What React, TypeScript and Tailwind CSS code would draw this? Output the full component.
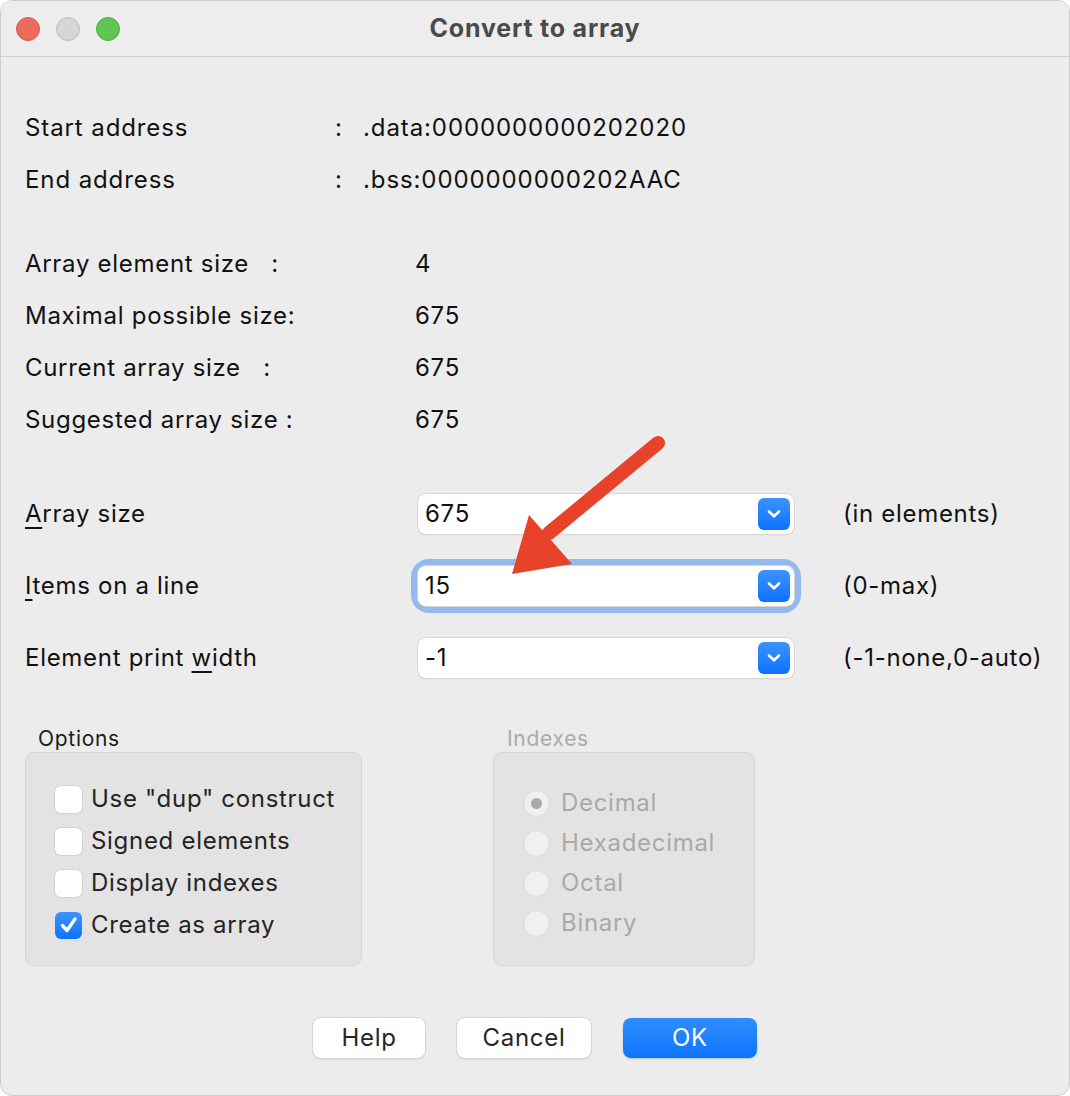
import React from 'react';

const font = { fontFamily: 'Inter, "Noto Sans", sans-serif' };

function Chevron() {
  return (
    <svg width="16" height="12" viewBox="0 0 16 12" fill="none">
      <path d="M3 3.5 L8 8.3 L13 3.5" stroke="white" strokeWidth="2.6" strokeLinecap="round" strokeLinejoin="round" />
    </svg>
  );
}

function ComboBox({ value, focused }: { value: string; focused?: boolean }) {
  return (
    <div className={focused ? 'rounded-[11px] shadow-[0_0_0_7px_#93b9ee]' : ''}>
      <div className="w-[376px] h-[40px] bg-white rounded-[8px] shadow-[0_0_0_1px_#d6d6d6,0_1px_1px_rgba(0,0,0,0.18)] flex items-center justify-between pl-[7px] pr-[4px]">
        <span className="text-[24px] text-[#111]">{value}</span>
        <div className="w-[32px] h-[32px] rounded-[6px] bg-gradient-to-b from-[#3a93ff] to-[#0a72ff] flex items-center justify-center">
          <Chevron />
        </div>
      </div>
    </div>
  );
}

function Check({ label, checked }: { label: string; checked?: boolean }) {
  return (
    <div className="flex items-center h-[42px]">
      {checked ? (
        <div className="w-[27px] h-[27px] rounded-[6px] bg-gradient-to-b from-[#3a93ff] to-[#0a72ff] flex items-center justify-center">
          <svg width="22" height="22" viewBox="0 0 22 22" fill="none">
            <path d="M4.5 11.5 L9 16.5 L17 5" stroke="white" strokeWidth="3.4" strokeLinecap="round" strokeLinejoin="round" />
          </svg>
        </div>
      ) : (
        <div className="w-[27px] h-[27px] rounded-[6px] bg-white shadow-[0_0_0_1px_#d3d3d3,0_1px_1px_rgba(0,0,0,0.12)]" />
      )}
      <span className="ml-[9px] text-[24px] text-[#242424]">{label}</span>
    </div>
  );
}

function Radio({ label, selected }: { label: string; selected?: boolean }) {
  return (
    <div className="flex items-center h-[40px]">
      <div className="w-[27px] h-[27px] rounded-full bg-[#f0f0f0] border border-[#d9d9d9] flex items-center justify-center">
        {selected && <div className="w-[11px] h-[11px] rounded-full bg-[#a9a9a9]" />}
      </div>
      <span className="ml-[11px] text-[24px] text-[#a9a9a9]">{label}</span>
    </div>
  );
}

function U({ children }: { children: React.ReactNode }) {
  return <span className="underline underline-offset-[5px] decoration-[1.5px]">{children}</span>;
}

export default function App() {
  const infoRows = [
    ['Array element size   :', '4'],
    ['Maximal possible size:', '675'],
    ['Current array size   :', '675'],
    ['Suggested array size :', '675'],
  ];

  return (
    <div className="w-[1070px] h-[1096px] bg-white" style={font}>
      <div className="relative w-[1070px] h-[1096px] bg-[#ececec] rounded-[12px] border border-[#cdcdcd] overflow-hidden flex flex-col tracking-[0.7px]">
        {/* title bar */}
        <div className="h-[56px] flex items-center border-b border-[#d0d0d0] bg-[#ededee] relative">
          <div className="flex items-center gap-[16px] pl-[15px]">
            <div className="w-[24px] h-[24px] rounded-full bg-[#ee6a5f] border border-[#d75a50]" />
            <div className="w-[24px] h-[24px] rounded-full bg-[#d6d6d6] border border-[#bdbdbd]" />
            <div className="w-[24px] h-[24px] rounded-full bg-[#61c554] border border-[#4fae44]" />
          </div>
          <div className="absolute inset-0 flex items-center justify-center">
            <span className="text-[25px] font-bold text-[#4a4a4a] tracking-[0.8px]">Convert to array</span>
          </div>
        </div>

        <div className="pl-[24px] text-[#111]">
          {/* addresses */}
          <div className="mt-[45px] tracking-[0.9px]">
            <div className="flex items-center h-[52px] text-[24px]">
              <span className="w-[310px]">Start address</span>
              <span className="w-[28px]">:</span>
              <span>.data:0000000000202020</span>
            </div>
            <div className="flex items-center h-[52px] text-[24px]">
              <span className="w-[310px]">End address</span>
              <span className="w-[28px]">:</span>
              <span>.bss:0000000000202AAC</span>
            </div>
          </div>

          {/* info */}
          <div className="mt-[32px]">
            {infoRows.map(([label, val]) => (
              <div key={label} className="flex items-center h-[52px] text-[24px]">
                <span className="w-[390px] whitespace-pre">{label}</span>
                <span>{val}</span>
              </div>
            ))}
          </div>

          {/* combo rows */}
          <div className="mt-[32px]">
            <div className="flex items-center h-[72px] text-[24px]">
              <span className="w-[393px]"><U>A</U>rray size</span>
              <ComboBox value="675" />
              <span className="ml-[49px]">(in elements)</span>
            </div>
            <div className="flex items-center h-[72px] text-[24px]">
              <span className="w-[393px]"><U>I</U>tems on a line</span>
              <ComboBox value="15" focused />
              <span className="ml-[49px]">(0-max)</span>
            </div>
            <div className="flex items-center h-[72px] text-[24px]">
              <span className="w-[393px]">Element print <U>w</U>idth</span>
              <ComboBox value="-1" />
              <span className="ml-[49px]">(-1-none,0-auto)</span>
            </div>
          </div>

          {/* groups */}
          <div className="mt-[32px] flex gap-[131px]">
            <div>
              <div className="h-[26px] flex items-center pl-[13px] text-[21px] text-[#1c1c1c]">Options</div>
              <div className="w-[337px] h-[214px] rounded-[9px] bg-[#e3e3e3] border border-[#d6d6d6] pl-[29px] pt-[25px]">
                <Check label={'Use "dup" construct'} />
                <Check label="Signed elements" />
                <Check label="Display indexes" />
                <Check label="Create as array" checked />
              </div>
            </div>
            <div>
              <div className="h-[26px] flex items-center pl-[14px] text-[21px] text-[#ababab]">Indexes</div>
              <div className="w-[262px] h-[214px] rounded-[9px] bg-[#e3e3e3] border border-[#d6d6d6] pl-[29px] pt-[30px]">
                <Radio label="Decimal" selected />
                <Radio label="Hexadecimal" />
                <Radio label="Octal" />
                <Radio label="Binary" />
              </div>
            </div>
          </div>
        </div>

        {/* buttons */}
        <div className="mt-[52px] flex justify-center gap-[32px] text-[24px]">
          <button className="w-[112px] h-[40px] rounded-[8px] bg-white text-[#262626] shadow-[0_0_0_1px_#d4d4d4,0_1px_2px_rgba(0,0,0,0.2)]">Help</button>
          <button className="w-[134px] h-[40px] rounded-[8px] bg-white text-[#262626] shadow-[0_0_0_1px_#d4d4d4,0_1px_2px_rgba(0,0,0,0.2)]">Cancel</button>
          <button className="w-[134px] h-[40px] rounded-[8px] bg-gradient-to-b from-[#2f8dff] to-[#0a74ff] text-white shadow-[0_1px_2px_rgba(0,0,0,0.2)]">OK</button>
        </div>

        {/* annotation arrow */}
        <svg className="absolute left-0 top-0 pointer-events-none" width="1070" height="1096">
          <line x1="657" y1="442" x2="548" y2="532" stroke="#e8432a" strokeWidth="14" strokeLinecap="round" />
          <polygon points="511,573 528,514 571,563" fill="#e8432a" />
        </svg>
      </div>
    </div>
  );
}
